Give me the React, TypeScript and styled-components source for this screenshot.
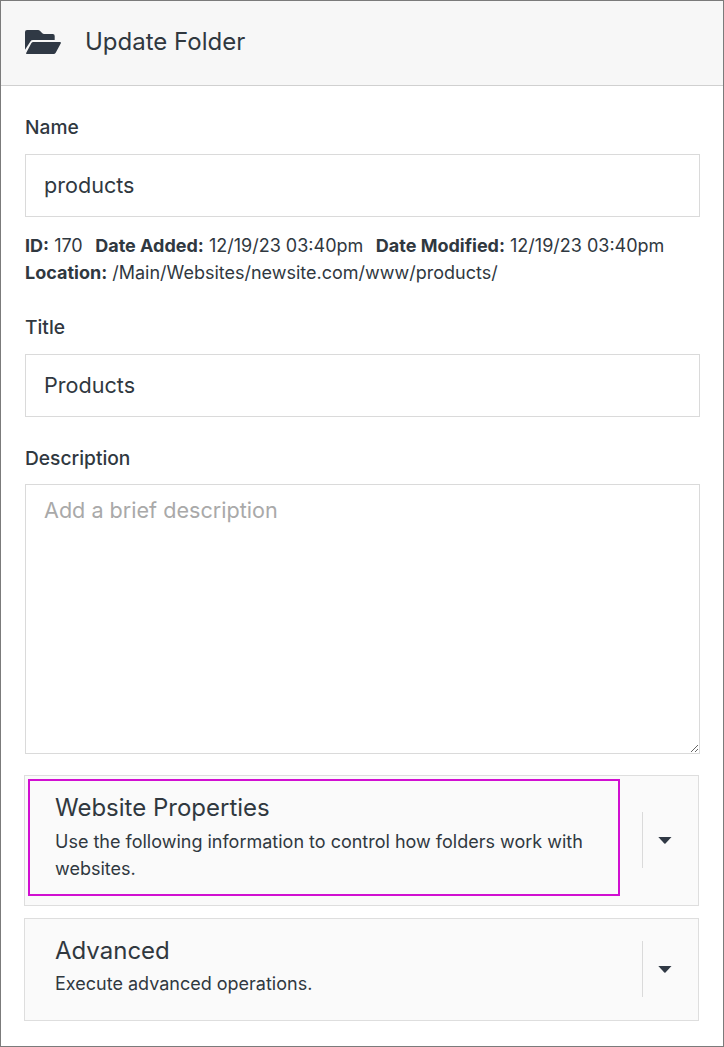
import React from 'react';
import styled, { createGlobalStyle } from 'styled-components';

const Global = createGlobalStyle`
  * { box-sizing: border-box; }
  body { margin: 0; background: #fff; color: #30383f; font-family: Inter, sans-serif; }
`;
const Page = styled.main`
  width: 724px; height: 1047px; border: 1px solid #7b7b7b; background: #fff; overflow: hidden;
`;
const Header = styled.header`
  height: 85px; display: flex; align-items: center; gap: 24px; padding: 0 24px 3px;
  background: #f7f7f7; border-bottom: 1px solid #d0d0d0;
`;
const FolderIcon = styled.svg`
  width: 36px; height: 24px; margin-top: 1px; fill: #303945; flex: none;
`;
const Heading = styled.h1`
  margin: 0; font-size: 24px; font-weight: 400; line-height: 32px;
`;
const Form = styled.div`
  padding: 27px 23px 0 24px;
`;
const Label = styled.label<{ $gap?: number }>`
  display: block; font-size: 19.2px; font-weight: 500; line-height: 28px; margin-bottom: ${p => p.$gap ?? 13}px;
`;
const Input = styled.input`
  display: block; width: 100%; height: 63px; padding: 0 18px 1px; border: 1px solid #dadada; border-radius: 0;
  font: 400 21.6px Inter, sans-serif; color: #30383f; background: #fff; outline: none;
`;
const TextArea = styled.textarea`
  display: block; width: 100%; height: 270px; padding: 8px 18px; border: 1px solid #dadada; border-radius: 0;
  font: 400 21.6px/34px Inter, sans-serif; background: #fff; outline: none; resize: vertical;
  &::placeholder { color: #a9a9a9; }
`;
const Meta = styled.div`
  margin: 15px 0 27px; font-size: 18px; line-height: 27px; white-space: nowrap;
`;
const MetaRow = styled.div`
  display: flex; gap: 12.5px;
`;
const TitleField = styled.div`
  margin-bottom: 27px;
`;
const Panels = styled.div`
  display: flex; flex-direction: column; gap: 12px; margin: 21px 1px 0 -1px;
`;
const Panel = styled.section<{ $height: number }>`
  height: ${p => p.$height}px; display: flex; justify-content: space-between; align-items: center;
  background: #fafafa; border: 1px solid #dedede; padding: 3px 3px 4px;
`;
const PanelText = styled.div<{ $marked?: boolean }>`
  align-self: flex-start; width: 592px; height: ${p => (p.$marked ? 117 : 90)}px; padding: 10px 25px;
  border: 2px solid ${p => (p.$marked ? '#d10fd1' : 'transparent')};
`;
const PanelTitle = styled.h2`
  margin: 0; font-size: 24px; font-weight: 400; line-height: 34px;
`;
const PanelCopy = styled.p<{ $gap: number }>`
  margin: ${p => p.$gap}px 0 0; font-size: 18px; line-height: 27px;
`;
const Toggle = styled.button`
  width: 53px; height: 56px; padding: 0 0 0 15px; border: 0; border-left: 1px solid #dadada; background: transparent;
  display: flex; align-items: center; color: #303945;
`;

function Item({ title, copy, height, gap, marked }: { title: string; copy: string; height: number; gap: number; marked?: boolean }) {
  return (
    <Panel $height={height}>
      <PanelText $marked={marked}>
        <PanelTitle>{title}</PanelTitle>
        <PanelCopy $gap={gap}>{copy}</PanelCopy>
      </PanelText>
      <Toggle aria-label={title}>
        <svg width="14" height="8" viewBox="0 0 14 8"><path d="M.3 .9H13.5L7.5 7.4Q6.9 7.9 6.3 7.4Z" fill="currentColor" /></svg>
      </Toggle>
    </Panel>
  );
}

export default function App() {
  return (
    <>
      <Global />
      <Page>
        <Header>
          <FolderIcon viewBox="0 0 36 24">
            <path d="M0 19.8V2Q0 0 2 0H13Q14.3 0 15.1 .9L17.3 3.2Q18 4 19 4H27.8Q29.7 4 29.7 5.9V10H8Q6.3 10 5.4 11.4Z" />
            <path d="M8.4 12H34.9Q36.5 12 35.7 13.5L30.7 22.8Q30 24 28.6 24H2.1Q.6 24 1.4 22.6L6.3 13.3Q7 12 8.4 12Z" />
          </FolderIcon>
          <Heading>Update Folder</Heading>
        </Header>
        <Form>
          <Label htmlFor="name">Name</Label>
          <Input id="name" defaultValue="products" />
          <Meta>
            <MetaRow>
              <span><b>ID:</b> 170</span>
              <span><b>Date Added:</b> 12/19/23 03:40pm</span>
              <span><b>Date Modified:</b> 12/19/23 03:40pm</span>
            </MetaRow>
            <div><b>Location:</b> /Main/Websites/newsite.com/www/products/</div>
          </Meta>
          <TitleField>
            <Label htmlFor="title">Title</Label>
            <Input id="title" defaultValue="Products" />
          </TitleField>
          <Label htmlFor="description" $gap={12}>Description</Label>
          <TextArea id="description" placeholder="Add a brief description" />
          <Panels>
            <Item title="Website Properties" copy="Use the following information to control how folders work with websites." height={131} gap={3} marked />
            <Item title="Advanced" copy="Execute advanced operations." height={103} gap={2} />
          </Panels>
        </Form>
      </Page>
    </>
  );
}
